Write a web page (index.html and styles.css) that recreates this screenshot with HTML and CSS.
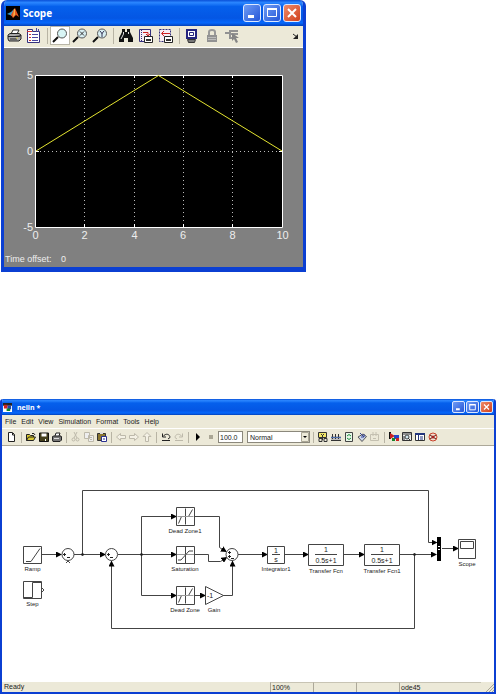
FILE: index.html
```html
<!DOCTYPE html>
<html lang="en">
<head>
<meta charset="utf-8">
<title>nelin - Scope</title>
<link rel="stylesheet" href="styles.css">
</head>
<body>
<section class="window scope" aria-label="Scope">
  <header class="titlebar">
    <svg class="logo" viewBox="0 0 14 14"><path fill="#000" d="M0 0h14v14H0z"/><path fill="#3c9ac8" d="M1 8l4-2 3-3-2 7-2-1z"/><path fill="#e2571e" d="M5 9l3-6 1-1 4 9-3-2-3 3z"/><path fill="#f6b04a" d="M8 3l1 0 0 6-2 2z"/></svg>
    <h1>Scope</h1>
    <button class="win-btn" aria-label="Minimize"><svg viewBox="0 0 16 16"><path fill="#fff" d="M4 10h6v3H4z"/></svg></button>
    <button class="win-btn" aria-label="Maximize"><svg viewBox="0 0 16 16"><path fill="none" stroke="#fff" d="M3.500 4.500h9v7h-9z"/><path fill="#fff" d="M3 3h10v2H3z"/></svg></button>
    <button class="win-btn close" aria-label="Close"><svg viewBox="0 0 16 16"><path stroke="#fff" stroke-width="2" d="M4 4l8 8M12 4l-8 8"/></svg></button>
  </header>
  <div class="toolbar">
    <button aria-label="Print"><svg viewBox="0 0 16 16"><path fill="#fff" stroke="#222" d="M5 6l2-4h6l-2 4"/><path fill="#aaa" stroke="#222" d="M2 7l2-1.500h9l2 1.500v4l-2 2H3l-1-2z"/><path stroke="#222" d="M2 8.500h11l2-1M4 11h7"/><path stroke="#e4d44c" d="M10 10h2"/></svg></button>
    <button aria-label="Parameters"><svg viewBox="0 0 16 16"><path fill="#fff" stroke="#34307e" d="M1.500 1.500h5v2h7v11h-12z"/><path stroke="#c33" d="M1 3.500h5M3 6.500h2M3 9.500h2M3 12.500h2"/><path stroke="#4a46a0" d="M6 6.500h6M6 9.500h6M6 12.500h6M10.500 0v4M12.500 1v3"/></svg></button>
    <i class="sep"></i>
    <button class="pressed" aria-label="Zoom"><svg viewBox="0 0 16 16"><path stroke="#111" stroke-width="2" d="M1 14l5-5"/><circle cx="10" cy="5.500" r="4.500" fill="#d8f5f5" stroke="#555"/></svg></button>
    <button aria-label="Zoom X-axis"><svg viewBox="0 0 16 16"><path stroke="#111" stroke-width="2" d="M1 14l5-5"/><circle cx="10" cy="5.500" r="4.500" fill="#d8eef2" stroke="#555"/><path stroke="#333" d="M8 3.500l4 4M12 3.500l-4 4"/></svg></button>
    <button aria-label="Zoom Y-axis"><svg viewBox="0 0 16 16"><path stroke="#111" stroke-width="2" d="M1 14l5-5"/><circle cx="10" cy="5.500" r="4.500" fill="#d8eef2" stroke="#555"/><path fill="none" stroke="#335" d="M8 3l2 2.500L12 3M10 5v4"/></svg></button>
    <i class="sep"></i>
    <button aria-label="Autoscale"><svg viewBox="0 0 16 16"><path fill="#111" d="M4 1h3v3h2V1h3v3l3 6v4h-5v-4H6v4H1v-4l3-6z"/><path stroke="#ddd" d="M5.500 4v2L3 11M10.500 4v2"/></svg></button>
    <button aria-label="Save axes settings"><svg viewBox="0 0 16 16"><path fill="#f6eef4" stroke="#34307e" d="M1.500 1.500h11v12h-11z"/><path stroke="#34307e" stroke-dasharray="1 1" d="M3.500 2v11"/><path fill="none" stroke="#c22" d="M5 4.500h5v3M8 6l2 2 2-2"/><path fill="#fff" stroke="#222" d="M6.500 8.500h8v6h-8z"/><path fill="#333" d="M8 11h5v2H8z"/></svg></button>
    <button aria-label="Restore axes settings"><svg viewBox="0 0 16 16"><path fill="#f6eef4" stroke="#34307e" stroke-dasharray="2 1" d="M1.500 1.500h11v12h-11z"/><path fill="none" stroke="#c22" d="M12 5.500H4M6 3L3.500 5.500 6 8"/><path fill="#fff" stroke="#222" d="M6.500 8.500h8v6h-8z"/><path fill="#333" d="M8 11h5v2H8z"/></svg></button>
    <i class="sep"></i>
    <button aria-label="Floating scope"><svg viewBox="0 0 16 16"><path fill="#fff" stroke="#24247e" stroke-width="2" d="M3 2h9v8H3z"/><path fill="none" stroke="#24247e" d="M5.500 4.500h4v3h-4z"/><path fill="#777" stroke="#333" d="M3.500 11.500h8l-1 3h-6z"/></svg></button>
    <button aria-label="Lock axes"><svg viewBox="0 0 16 16"><path fill="none" stroke="#999" stroke-width="2" d="M5 8V4q0-2 3-2t3 2v4"/><path fill="#929292" d="M3 7h10v7H3z"/><path stroke="#bbb" d="M4 9.500h8M4 11.500h8"/></svg></button>
    <button aria-label="Signal selection"><svg viewBox="0 0 16 16"><path fill="none" stroke="#929292" stroke-width="2" d="M1 5h4M14 3H6v7h3M6 6h8"/><path fill="#858585" d="M8 5l7 5-3 0 2 4-2 1-2-4-2 2z"/></svg></button>
    <span class="dock"><svg viewBox="0 0 8 8"><path stroke="#222" stroke-width="1" d="M1 2l4 3"/><path fill="#222" d="M6 2v5H1z"/></svg></span>
  </div>
  <svg class="plot" viewBox="4 48 299 219" role="img" aria-label="Scope trace">
    <path fill="#000" stroke="#fff" d="M35.500 75.500h247v152h-247z"/>
    <path class="grid" d="M84.500 76v151M134.500 76v151M183.500 76v151M232.500 76v151M36 151.500h246"/>
    <path stroke="#fff" d="M84.500 75v3M134.500 75v3M183.500 75v3M232.500 75v3M84.500 227v-3M134.500 227v-3M183.500 227v-3M232.500 227v-3M36 151.500h3M282 151.500h-3"/>
    <path class="trace" d="M36 151L158.500 75.500 282 151"/>
    <g class="y-labels"><text x="33" y="79">5</text><text x="33" y="155">0</text><text x="33" y="231">-5</text></g>
    <g class="x-labels"><text x="35.500" y="239">0</text><text x="84.500" y="239">2</text><text x="134.500" y="239">4</text><text x="183" y="239">6</text><text x="232.500" y="239">8</text><text x="282.500" y="239">10</text></g>
    <text class="offset" x="5" y="262">Time offset:</text><text class="offset" x="61" y="262">0</text>
  </svg>
</section>

<section class="window model" aria-label="nelin">
  <header class="titlebar">
    <svg class="logo" viewBox="0 0 10 10"><path fill="#fff" d="M0 0h10v10H0z"/><path fill="#222" d="M0 0h10v3H0z"/><path fill="#c22" d="M1 2h4v4H1z"/><path fill="#24a" d="M5 3h4v4H5z"/><path fill="#182" d="M4 6h4v3H4z"/></svg>
    <h2>nelin *</h2>
    <button class="win-btn" aria-label="Minimize"><svg viewBox="0 0 16 16"><path fill="#fff" d="M4 10h6v3H4z"/></svg></button>
    <button class="win-btn" aria-label="Maximize"><svg viewBox="0 0 16 16"><path fill="none" stroke="#fff" stroke-width="1.500" d="M3.500 4.500h9v8h-9z"/><path fill="#fff" d="M3 3h10v2H3z"/></svg></button>
    <button class="win-btn close" aria-label="Close"><svg viewBox="0 0 16 16"><path stroke="#fff" stroke-width="2" d="M4 4l8 8M12 4l-8 8"/></svg></button>
  </header>
  <nav class="menu">
    <button>File</button><button>Edit</button><button>View</button><button>Simulation</button><button>Format</button><button>Tools</button><button>Help</button>
  </nav>
  <div class="toolbar">
    <button aria-label="New"><svg viewBox="0 0 10 10"><path fill="#fff" stroke="#222" d="M1.500.500h4l2 2v7h-6zM5.500 1v2h2"/></svg></button>
    <i class="sep"></i>
    <button aria-label="Open"><svg viewBox="0 0 10 10"><path fill="#d8c832" stroke="#222" d="M.500 8.500v-6h3l1 1h3v1.500M.500 8.500l2-3.500h7l-2 3.500z"/><path stroke="#222" fill="none" d="M6 1.500h2l1 1.500"/></svg></button>
    <button aria-label="Save"><svg viewBox="0 0 10 10"><path fill="#443f1c" stroke="#111" d="M.500 1h9v8.500h-9z"/><path fill="#fff" d="M2.500 1.500h5v3h-5zM6 7h1v2H6z"/></svg></button>
    <button aria-label="Print"><svg viewBox="0 0 10 10"><path fill="#fff" stroke="#222" d="M3 4l1-3h4L7 4"/><path fill="#777" stroke="#222" d="M.500 4.500L2 4h7l.500 1v3L8 9.500H1L.500 8z"/><path stroke="#ddd" d="M2 6.500h5"/></svg></button>
    <i class="sep"></i>
    <button aria-label="Cut"><svg viewBox="0 0 10 10"><g fill="none" stroke="#bdb9aa"><path d="M3 0l3 6M6 0L3 6"/><circle cx="2.500" cy="7.500" r="1.500"/><circle cx="6.500" cy="7.500" r="1.500"/></g></svg></button>
    <button aria-label="Copy"><svg viewBox="0 0 10 10"><path fill="#eee" stroke="#bdb9aa" d="M.500.500h5v6h-5zM4.500 3.500h5v6h-5zM6 5.500h2M6 7.500h2"/></svg></button>
    <button aria-label="Paste"><svg viewBox="0 0 10 10"><path fill="#8a7730" stroke="#333" d="M.500 1.500h8v7h-8z"/><path fill="#ddd" d="M3 0h3v2H3z"/><path fill="#fff" stroke="#2b3190" d="M4.500 4.500h5v5h-5z"/><path stroke="#2b3190" d="M6 7h2"/></svg></button>
    <i class="sep"></i>
    <button aria-label="Back"><svg viewBox="0 0 10 10"><path fill="#f4f1e5" stroke="#bdb9aa" d="M.500 5l4-3.500v2h5v3h-5v2z"/></svg></button>
    <button aria-label="Forward"><svg viewBox="0 0 10 10"><path fill="#f4f1e5" stroke="#bdb9aa" d="M9.500 5l-4-3.500v2h-5v3h5v2z"/></svg></button>
    <button aria-label="Up"><svg viewBox="0 0 10 10"><path fill="#f4f1e5" stroke="#bdb9aa" d="M5 .500l4 4H6.500v5h-3v-5H1z"/></svg></button>
    <i class="sep"></i>
    <button aria-label="Undo"><svg viewBox="0 0 10 10"><path fill="none" stroke="#222" d="M1.500 1.500v3.500h3.500M2 4.500c3-4 7-2 7 1L7 7M1 8.500h8"/></svg></button>
    <button aria-label="Redo"><svg viewBox="0 0 10 10"><path fill="none" stroke="#bdb9aa" d="M8.500 1.500v3.500H5M8 4.500c-3-4-7-2-7 1L3 7M1 8.500h8"/></svg></button>
    <i class="sep"></i>
    <button aria-label="Start"><svg viewBox="0 0 10 10"><path d="M3 1l4 4-4 4z"/></svg></button>
    <button aria-label="Stop"><svg viewBox="0 0 10 10"><path fill="#aaa695" d="M3 3h4v4H3z"/></svg></button>
    <input class="time" type="text" value="100.0" aria-label="Stop time">
    <span class="mode"><select aria-label="Simulation mode"><option>Normal</option></select><svg class="drop" viewBox="0 0 8 10"><path fill="#ece9d8" stroke="#aaa695" d="M.500.500h7v9h-7z"/><path d="M2 4h4l-2 2z"/></svg></span>
    <i class="sep"></i>
    <button aria-label="Library browser"><svg viewBox="0 0 10 10"><path fill="#f2e76a" stroke="#333" d="M.500.500h8v5h-8z"/><path fill="none" stroke="#333" d="M3 2l1.500 1.500L6 2M4.500 3v5M1 9.500h3v-3H1zM6 9.500h3v-3H6z"/></svg></button>
    <button aria-label="Model explorer"><svg viewBox="0 0 10 10"><path fill="#bbb" d="M0 4h10v5H0z"/><path stroke="#333" d="M0 8.500h10M1.500 2v5M4.500 2v5M7.500 2v5"/><path stroke="#4d6fa8" d="M0 5.500h10"/></svg></button>
    <button aria-label="Update diagram"><svg viewBox="0 0 10 10"><path fill="#e8f6e8" stroke="#444" d="M1.500.500h7v9h-7z"/><path fill="none" stroke="#188a3a" d="M3 4l2-1.500L7 4M7 6L5 7.500 3 6"/></svg></button>
    <button aria-label="Build model"><svg viewBox="0 0 10 10"><path fill="#c9d4ec" stroke="#555" d="M1 5l5-3 3.500 2.500L5 9.500z"/><path fill="none" stroke="#34428e" d="M3 1l4 4M7 2v3H4"/></svg></button>
    <button aria-label="Refresh"><svg viewBox="0 0 10 10"><path fill="none" stroke="#c4c0b0" d="M.500 2.500h8v6h-8zM3 0v4M6 0v4M3 6.500h3"/></svg></button>
    <i class="sep"></i>
    <button aria-label="Library"><svg viewBox="0 0 10 10"><path fill="#111" d="M0 0h2v7H0z"/><path fill="#cb2222" d="M1 1l5 3-5 3z"/><path fill="#2744c7" d="M5 3h5v4H5z"/><path fill="#18832c" d="M3 6h3v3H3z"/><path fill="#cb2222" d="M7 6h3v3H7z"/></svg></button>
    <button aria-label="Explorer"><svg viewBox="0 0 10 10"><path fill="#eee" stroke="#333" d="M.500.500h9v8h-9z"/><path stroke="#333" d="M1 2h8"/><circle cx="5" cy="5" r="2" fill="#cfe6ee" stroke="#444"/><path stroke="#333" d="M6 6l3 3M2 4v4"/></svg></button>
    <button aria-label="Model browser"><svg viewBox="0 0 10 10"><path fill="#fff" stroke="#333" d="M.500 1.500h9v7h-9z"/><path fill="#22357c" d="M0 1h10v2H0z"/><path stroke="#22357c" d="M3.500 3v5M5 5h3M5 7h3"/></svg></button>
    <button aria-label="Debug"><svg viewBox="0 0 10 10"><circle cx="5" cy="5" r="4" fill="#f3dfd0" stroke="#c8422c"/><path stroke="#5a2018" d="M2 3l6 4M2 7l6-4"/><circle cx="5" cy="5" r="1.500" fill="#a22"/></svg></button>
  </div>
  <svg class="diagram" viewBox="2 446 492 236" role="img" aria-label="Block diagram">
    <defs>
      <marker id="arrow" markerUnits="userSpaceOnUse" markerWidth="6" markerHeight="6" refX="5" refY="3" orient="auto"><path d="M0 0l6 3-6 3z"/></marker>
      <g id="dead-zone"><path class="block" d="M0 0h18v18H0zM9 1v16M2 16l3-7M12 9l4-7"/><path class="axis" d="M1 9h16"/></g>
    </defs>
    <g class="wires">
      <path d="M42 554.500h19"/><path d="M74 554.500h31"/><path d="M82.500 554.500v-64h346v52h8"/>
      <path d="M118 554.500h58"/><path d="M141.500 554.500v-38h34.500"/><path d="M141.500 554.500v41h34.500"/>
      <path d="M195 516.500h24.500v31l6.500 4"/><path d="M195 554.500h13.500v7h12l6-4"/><path d="M195 595.500h10"/><path d="M223 595.500h9.500v-34"/>
      <path d="M238 554.500h29"/><path d="M285 554.500h23"/><path d="M344 554.500h20"/><path d="M400 554.500h36"/>
      <path d="M414.500 554.500v74h-303v-67"/><path d="M442 548.500h16"/>
    </g>
    <g class="joints"><circle cx="82.500" cy="554.500" r="1"/><circle cx="141.500" cy="554.500" r="1"/><circle cx="414.500" cy="554.500" r="1"/></g>
    <path class="block" d="M23.500 546.500h18v17h-18zM26 561.500h5l9-13"/>
    <path class="block" d="M23.500 581.500h18v17h-18zM24 597.500h8.500v-15h9M42 588l2 2-2 2"/>
    <g class="block"><circle cx="68" cy="554.500" r="6"/><circle cx="111.500" cy="554.500" r="6"/><circle cx="232" cy="554.500" r="6"/>
      <path d="M66 563l2-2 2 2"/></g>
    <path stroke="#222" d="M63 554.500h3M64.500 553v3M67 557.500h3M107 554.500h3M108.500 553v3M110 557.500h3M228 552.500h3M229.500 551v3M228 556.500h3M229.500 555v3M231 558.500h3"/>
    <use href="#dead-zone" x="176.500" y="507.500"/><use href="#dead-zone" x="176.500" y="586.500"/>
    <path class="block" d="M176.500 546.500h18v17h-18zM185.500 547v16"/><path class="axis" d="M177 554.500h17"/><path fill="none" stroke="#444" d="M178 560h3l8-9h4"/>
    <path class="block" d="M205.500 586.500v18l18-9z"/>
    <path class="block" d="M267.500 546.500h17v17h-17zM272 554.500h8"/>
    <path class="block" d="M308.500 544.500h35v21h-35zM315 554.500h22M364.500 544.500h35v21h-35zM371 554.500h22"/>
    <path d="M437 537h4v24h-4z"/><path fill="#fff" d="M438 546h2v1h-2zM438 549h2v1h-2z"/>
    <path class="block" d="M458.500 539.500h17v19h-17zM460.500 541.500h13v7h-13z"/>
    <g class="labels">
      <text x="32.500" y="571">Ramp</text><text x="32.500" y="606">Step</text>
      <text x="185" y="533">Dead Zone1</text><text x="185" y="571">Saturation</text><text x="185" y="612">Dead Zone</text><text x="214" y="612">Gain</text>
      <text x="276" y="571">Integrator1</text><text x="326" y="573">Transfer Fcn</text><text x="382" y="573">Transfer Fcn1</text><text x="467" y="566">Scope</text>
    </g>
    <g class="values">
      <text x="210" y="598">-1</text><text x="276" y="553">1</text><text x="276" y="562">s</text>
      <text x="326" y="552">1</text><text x="326" y="563">0.5s+1</text>
      <text x="382" y="552">1</text><text x="382" y="563">0.5s+1</text>
    </g>
  </svg>
  <footer class="status">
    <span class="ready">Ready</span><span>100%</span><span></span><span></span><span class="solver">ode45</span>
    <svg class="grip" viewBox="0 0 10 10"><path stroke="#aaa695" d="M2 10l8-8M5 10l5-5M8 10l2-2"/></svg>
  </footer>
</section>
</body>
</html>
```
FILE: styles.css
```css
* { box-sizing: border-box; }
body {
  margin: 0;
  background: #fff;
  color: #222;
  font-family: "Liberation Sans", sans-serif;
  font-size: 7px;
}
button, input, select { font: inherit; color: inherit; }
button {
  display: flex;
  align-items: center;
  justify-content: center;
  flex: none;
  margin: 0;
  padding: 0;
  border: 0;
  background: none;
}
svg { display: block; flex: none; }

.window { background: #ece9d8; border-style: solid; border-color: #0b3fd2; }
.scope {
  max-width: 305px;
  margin-left: 1px;
  border-width: 0 3px 5px;
  border-radius: 6px 6px 0 0;
  overflow: hidden;
}
.model {
  margin-top: 127px;
  border-width: 0 2px 2px;
  border-radius: 3px 3px 0 0;
  overflow: hidden;
}

.titlebar {
  display: flex;
  align-items: center;
  gap: 2px;
  margin: 0 -3px;
  background: linear-gradient(#0a50d8, #2a86ff 10%, #0560ec 25%, #0456e4 70%, #0668fc 88%, #0340b8);
  color: #fff;
}
.titlebar h1, .titlebar h2 { flex: 1; margin: 0; font-family: "Open Sans", sans-serif; font-weight: 700; }
.scope .titlebar { height: 26px; padding: 2px 5px; }
.scope h1 { margin-left: 1px; font-size: 10px; }
.scope .logo { width: 14px; height: 14px; }
.model .titlebar { height: 16px; padding: 0 4px; gap: 1px; }
.model h2 { margin-left: 4px; font-size: 7px; }
.model .logo { width: 9px; height: 9px; }
.win-btn {
  width: 18px;
  height: 18px;
  border: 1px solid #dce8ff;
  border-radius: 3px;
  background: linear-gradient(135deg, #6f9cf4, #2456d8);
}
.win-btn.close { background: linear-gradient(135deg, #f08a68, #d0401c); }
.win-btn svg { width: 16px; height: 16px; }
.model .win-btn { width: 13px; height: 12px; border-radius: 2px; }
.model .win-btn svg { width: 11px; height: 10px; }

.toolbar { display: flex; align-items: center; }
.scope .toolbar { height: 22px; padding-bottom: 2px; border-bottom: 1px solid #fff; }
.scope .toolbar button { width: 20px; height: 19px; }
.scope .toolbar button svg { width: 16px; height: 16px; }
.scope .pressed { border: 1px solid #b9b6a8; background: #fff; }
.sep { flex: none; width: 6px; height: 16px; }
.sep::before { content: ""; display: block; width: 1px; height: 100%; margin: 0 auto; background: #b8b4a4; }
.dock { margin-left: auto; padding-right: 3px; }
.dock svg { width: 8px; height: 8px; }

.plot { width: 100%; height: auto; background: #808080; fill: none; }
.plot text { fill: #eee; font-size: 11px; }
.plot .offset { font-size: 9px; }
.y-labels { text-anchor: end; }
.x-labels { text-anchor: middle; }
.grid { stroke: #bbb; stroke-dasharray: 1 3; }
.trace { stroke: #e4e430; }

.menu { display: flex; gap: 5px; height: 13px; padding: 0 3px; }
.model .toolbar {
  height: 18px;
  padding: 0 3px;
  border-top: 1px solid #fff;
  border-bottom: 1px solid #aca899;
}
.model .toolbar button { width: 13px; height: 13px; }
.model .toolbar button svg { width: 10px; height: 10px; }
.model .sep { height: 11px; }
.time, .mode select {
  height: 12px;
  border: 1px solid #8b887c;
  border-radius: 0;
  background: #fff;
}
.time { width: 25px; margin: 0 4px 0 1px; padding: 0 1px; }
.mode { display: flex; position: relative; width: 63px; }
.mode select { appearance: none; width: 100%; padding: 0 2px; }
.drop { position: absolute; top: 1px; right: 1px; width: 8px; height: 10px; pointer-events: none; }

.diagram { width: 100%; height: auto; background: #fff; }
.wires path { fill: none; stroke: #444; marker-end: url(#arrow); }
.joints { fill: #222; stroke: #222; }
.block { fill: #fff; stroke: #444; }
.axis { stroke: #999; }
.labels, .values { fill: #222; text-anchor: middle; }
.labels { font-size: 6px; }
.values { font-size: 7px; }

.status { display: flex; height: 10px; padding-left: 1px; line-height: 9px; }
.status span { width: 43px; padding-left: 1px; border-left: 1px solid #aca899; border-top: 1px solid #c8c4b4; }
.status .ready { flex: 1; border: 0; line-height: 10px; }
.status .solver { width: 82px; }
.grip { width: 10px; height: 10px; margin-left: 3px; }
```
